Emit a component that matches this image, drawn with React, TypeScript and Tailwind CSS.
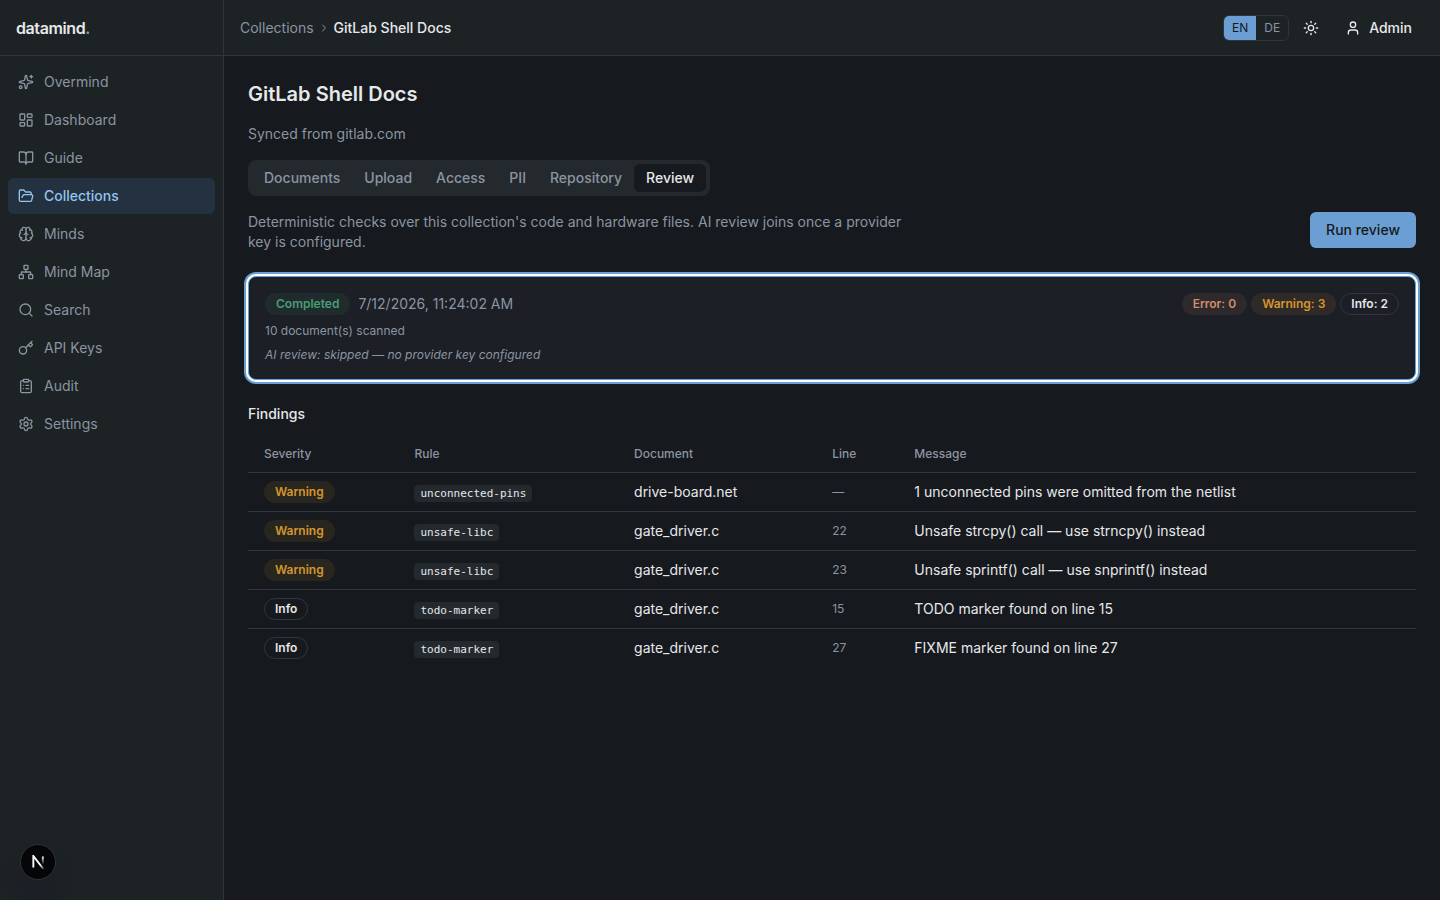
import {
  BookOpen,
  Brain,
  ChevronRight,
  ClipboardList,
  FolderOpen,
  Key,
  LayoutDashboard,
  Network,
  Search,
  Settings,
  Sparkles,
  Sun,
  User,
} from "lucide-react";
import type { ReactNode } from "react";

const navItems = [
  { label: "Overmind", icon: Sparkles },
  { label: "Dashboard", icon: LayoutDashboard },
  { label: "Guide", icon: BookOpen },
  { label: "Collections", icon: FolderOpen, active: true },
  { label: "Minds", icon: Brain },
  { label: "Mind Map", icon: Network },
  { label: "Search", icon: Search },
  { label: "API Keys", icon: Key },
  { label: "Audit", icon: ClipboardList },
  { label: "Settings", icon: Settings },
];

const tabs = ["Documents", "Upload", "Access", "PII", "Repository", "Review"];

const findings = [
  {
    severity: "Warning",
    rule: "unconnected-pins",
    document: "drive-board.net",
    line: "—",
    message: "1 unconnected pins were omitted from the netlist",
  },
  {
    severity: "Warning",
    rule: "unsafe-libc",
    document: "gate_driver.c",
    line: "22",
    message: "Unsafe strcpy() call — use strncpy() instead",
  },
  {
    severity: "Warning",
    rule: "unsafe-libc",
    document: "gate_driver.c",
    line: "23",
    message: "Unsafe sprintf() call — use snprintf() instead",
  },
  {
    severity: "Info",
    rule: "todo-marker",
    document: "gate_driver.c",
    line: "15",
    message: "TODO marker found on line 15",
  },
  {
    severity: "Info",
    rule: "todo-marker",
    document: "gate_driver.c",
    line: "27",
    message: "FIXME marker found on line 27",
  },
];

const badgeVariants = {
  success: "border-transparent bg-[#202b2d] text-[#4a9d74]",
  error: "border-transparent bg-[#2e292b] text-[#cf8d6c]",
  warning: "border-transparent bg-[#d4962e]/10 text-[#d4962e]",
  outline: "border-[#30363c] text-[#e6e8ea]",
};

type BadgeProps = {
  variant: keyof typeof badgeVariants;
  children: ReactNode;
};

const Badge = ({ variant, children }: BadgeProps) => (
  <span
    className={`inline-flex items-center rounded-full border px-2.5 py-0.5 text-xs font-semibold ${badgeVariants[variant]}`}
  >
    {children}
  </span>
);

const Sidebar = () => (
  <aside className="flex w-56 shrink-0 flex-col border-r border-[#30363c] bg-[#1d2225]">
    <div className="flex h-14 items-center border-b border-[#30363c] px-4">
      <a href="#" className="text-base font-semibold tracking-tight">
        datamind<span className="text-[#6b9fd4]">.</span>
      </a>
    </div>
    <nav className="flex flex-col gap-0.5 p-2">
      {navItems.map(({ label, icon: Icon, active }) => (
        <a
          key={label}
          href="#"
          className={`flex h-9 items-center gap-2.5 rounded-md px-2.5 text-sm ${
            active ? "bg-[#233140] font-medium text-[#93c5ee]" : "text-[#8b95a1]"
          }`}
        >
          <Icon className="size-4" />
          {label}
        </a>
      ))}
    </nav>
  </aside>
);

const Topbar = () => (
  <header className="flex h-14 shrink-0 items-center justify-between border-b border-[#30363c] bg-[#1d2225] px-4">
    <nav aria-label="Breadcrumb" className="flex items-center gap-1 text-sm">
      <a href="#" className="text-[#8b95a1]">
        Collections
      </a>
      <ChevronRight className="size-3 text-[#8b95a1]" />
      <span className="font-medium">GitLab Shell Docs</span>
    </nav>
    <div className="flex items-center gap-1">
      <div className="flex overflow-hidden rounded-md border border-[#30363c] text-xs">
        <button className="bg-[#6b9fd4] px-2 py-1 text-[#16191d]">EN</button>
        <button className="px-2 py-1 text-[#8b95a1]">DE</button>
      </div>
      <button aria-label="Toggle theme" className="flex size-9 items-center justify-center">
        <Sun className="size-4" />
      </button>
      <button className="flex h-9 items-center gap-2 px-3 text-sm font-medium">
        <User className="size-4" />
        Admin
      </button>
    </div>
  </header>
);

const RunCard = () => (
  <button className="block w-full rounded-lg border border-[#6b9fd4] bg-[#1c1f26] p-4 text-left ring-2 ring-[#6b9fd4] ring-offset-2 ring-offset-white">
    <div className="flex items-center justify-between">
      <div className="flex items-center gap-2">
        <Badge variant="success">Completed</Badge>
        <span className="text-sm text-[#8b95a1]">7/12/2026, 11:24:02 AM</span>
      </div>
      <div className="flex items-center gap-1">
        <Badge variant="error">Error: 0</Badge>
        <Badge variant="warning">Warning: 3</Badge>
        <Badge variant="outline">Info: 2</Badge>
      </div>
    </div>
    <p className="mt-2 text-xs text-[#8b95a1]">10 document(s) scanned</p>
    <p className="mt-2 text-xs text-[#8b95a1] italic">
      AI review: skipped — no provider key configured
    </p>
  </button>
);

const FindingsTable = () => (
  <table className="w-full text-left text-sm">
    <thead>
      <tr className="border-b border-[#30363c] text-xs text-[#8b95a1]">
        {["Severity", "Rule", "Document", "Line", "Message"].map((head) => (
          <th key={head} className="h-9 px-4 font-medium">
            {head}
          </th>
        ))}
      </tr>
    </thead>
    <tbody>
      {findings.map((finding, index) => (
        <tr key={index} className="border-b border-[#30363c] last:border-0">
          <td className="px-4 py-2">
            <div className="flex">
              <Badge variant={finding.severity === "Warning" ? "warning" : "outline"}>
                {finding.severity}
              </Badge>
            </div>
          </td>
          <td className="px-4">
            <code className="rounded bg-[#24292e] px-1.5 py-0.5 font-['DejaVu_Sans_Mono',monospace] text-[11px]">
              {finding.rule}
            </code>
          </td>
          <td className="px-4">{finding.document}</td>
          <td className="px-4 text-xs text-[#8b95a1]">{finding.line}</td>
          <td className="px-4">{finding.message}</td>
        </tr>
      ))}
    </tbody>
  </table>
);

const DevIndicator = () => (
  <button
    aria-label="Open dev tools"
    className="fixed bottom-5 left-5 flex size-9 items-center justify-center rounded-full border border-[#30333a] bg-[#050607] shadow-[0_16px_12px_4px_#1c1e2880]"
  >
    <svg viewBox="0 0 14 14" className="size-3.5" fill="none">
      <defs>
        <linearGradient id="diagonal" x1="10" y1="9" x2="13.3" y2="14.5" gradientUnits="userSpaceOnUse">
          <stop stopColor="white" />
          <stop offset="0.6" stopColor="white" stopOpacity="0.5" />
          <stop offset="1" stopColor="white" stopOpacity="0" />
        </linearGradient>
        <linearGradient id="stem" x1="11.8" y1="1.5" x2="11.8" y2="9.5" gradientUnits="userSpaceOnUse">
          <stop stopColor="white" />
          <stop offset="1" stopColor="white" stopOpacity="0" />
        </linearGradient>
      </defs>
      <path d="M13.3 15.2L2.34 1V12.6" stroke="url(#diagonal)" strokeWidth="1.86" />
      <path d="M11.825 1.5V13.1" stroke="url(#stem)" strokeWidth="1.86" />
    </svg>
  </button>
);

const App = () => {
  return (
    <div className="flex min-h-screen bg-[#16191d] font-['Inter',sans-serif] text-[#e6e8ea]">
      <Sidebar />
      <div className="flex min-w-0 flex-1 flex-col">
        <Topbar />
        <main className="flex flex-col gap-4 p-6">
          <h1 className="text-xl font-semibold">GitLab Shell Docs</h1>
          <p className="text-sm text-[#8b95a1]">Synced from gitlab.com</p>
          <div role="tablist" className="flex w-fit rounded-lg bg-[#24292e] p-1">
            {tabs.map((tab) => (
              <button
                key={tab}
                role="tab"
                aria-selected={tab === "Review"}
                className={`h-7 rounded-md px-3 text-sm font-medium ${
                  tab === "Review" ? "bg-[#16191d]" : "text-[#8b95a1]"
                }`}
              >
                {tab}
              </button>
            ))}
          </div>
          <section className="flex flex-col gap-6">
            <div className="flex items-start justify-between gap-4">
              <p className="max-w-2xl text-sm text-[#8b95a1]">
                Deterministic checks over this collection's code and hardware files. AI review
                joins once a provider key is configured.
              </p>
              <button className="h-9 shrink-0 rounded-md bg-[#6b9fd4] px-4 text-sm font-medium text-[#16191d]">
                Run review
              </button>
            </div>
            <RunCard />
            <div className="flex flex-col gap-3">
              <h2 className="text-sm font-medium">Findings</h2>
              <FindingsTable />
            </div>
          </section>
        </main>
      </div>
      <DevIndicator />
    </div>
  );
};

export default App;
